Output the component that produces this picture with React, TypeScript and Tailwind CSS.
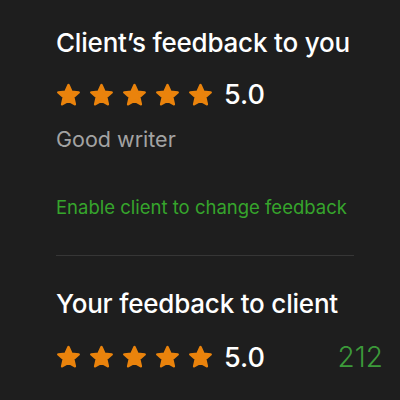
const Star = () => (
  <svg width="25" height="24" viewBox="0 0 24 23" className="shrink-0">
    <polygon
      points="12,2 14.9,8.3 21.8,9 16.6,13.6 18.1,20.4 12,16.9 5.9,20.4 7.4,13.6 2.2,9 9.1,8.3"
      fill="#ea830c"
      stroke="#ea830c"
      strokeWidth="2.4"
      strokeLinejoin="round"
    />
  </svg>
);

const Rating = ({ value }: { value: string }) => (
  <div className="flex items-center">
    <div className="flex gap-[8px]">
      {[0, 1, 2, 3, 4].map((i) => (
        <Star key={i} />
      ))}
    </div>
    <span className="ml-[11px] text-[27px] font-medium leading-none text-white">{value}</span>
  </div>
);

export default function App() {
  return (
    <div
      className="w-[400px] h-[400px] bg-[#1e1e1e] pl-14 pt-[30px] overflow-hidden"
      style={{ fontFamily: 'Inter, "Liberation Sans", Arial, sans-serif' }}
    >
      <h2 className="text-[26px] font-medium leading-none tracking-[-0.2px] text-white">
        Client’s feedback to you
      </h2>
      <div className="mt-[25px]">
        <Rating value="5.0" />
      </div>
      <p className="mt-[21px] text-[21.5px] leading-none text-[#a3a3a3]">Good writer</p>
      <button className="mt-[47px] block text-[18.5px] leading-none text-[#36a52c]">
        Enable client to change feedback
      </button>
      <div className="mt-[39px] h-px w-[298px] bg-[#363636]" />
      <h2 className="mt-[35px] text-[26px] font-medium leading-none tracking-[-0.2px] text-white">
        Your feedback to client
      </h2>
      <div className="mt-[26px] flex items-center justify-between pr-[17px]">
        <Rating value="5.0" />
        <span className="text-[28px] font-light leading-none text-[#3c9a3a]">212</span>
      </div>
    </div>
  );
}
